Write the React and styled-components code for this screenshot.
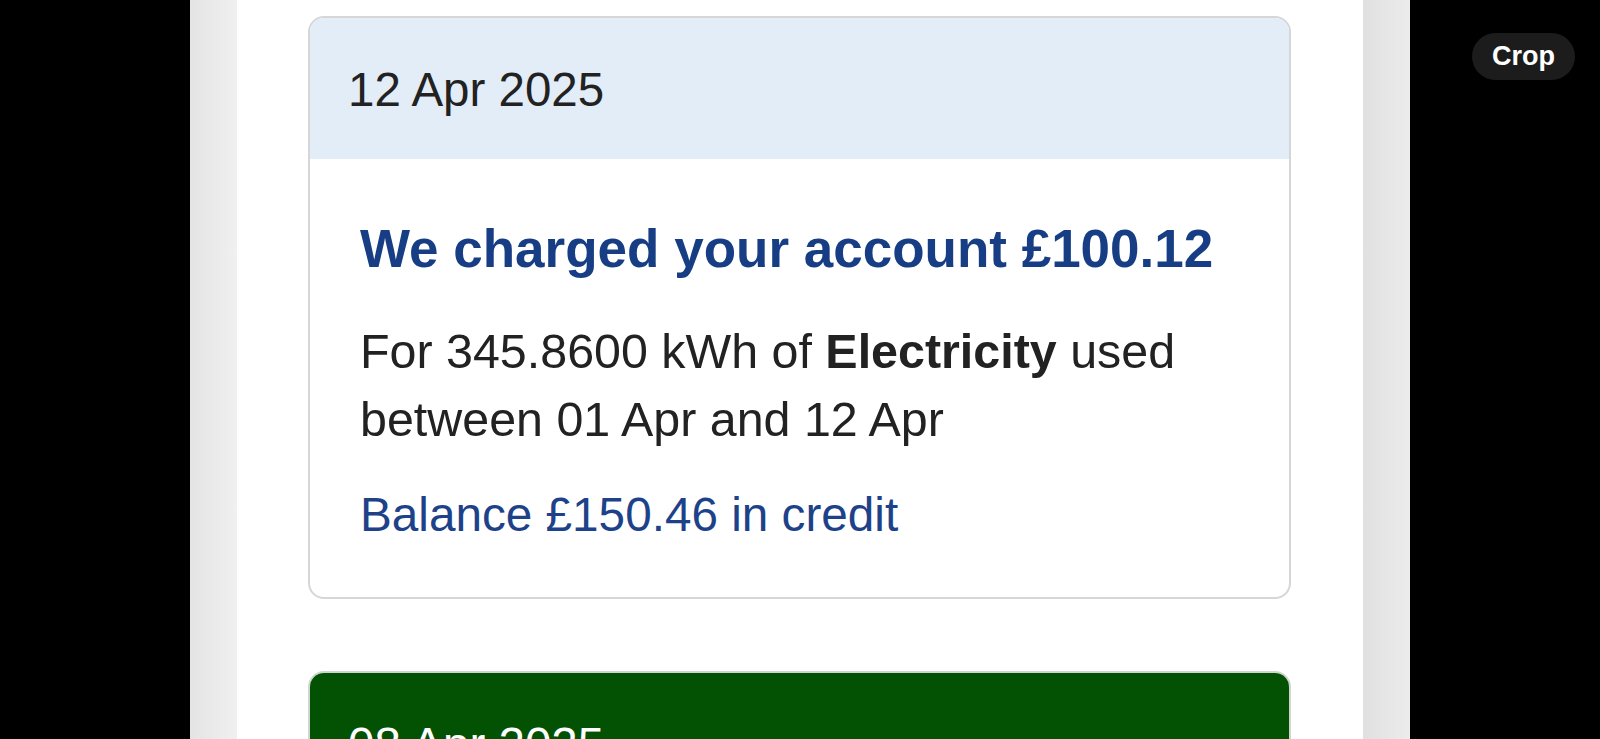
import React from "react";
import styled, { createGlobalStyle } from "styled-components";

const Global = createGlobalStyle`
  html, body { margin: 0; padding: 0; background: #000; }
  body { font-family: "Liberation Sans", Arial, sans-serif; }
  * { box-sizing: border-box; }
`;

const Screen = styled.div`
  display: flex;
  width: 1600px;
  height: 739px;
  overflow: hidden;
  background: #000;
`;

const Side = styled.div`
  width: 190px;
  flex: none;
  background: #000;
  display: flex;
  flex-direction: column;
  align-items: ${(p) => (p.$right ? "flex-start" : "stretch")};
  padding: ${(p) => (p.$right ? "33px 0 0 62px" : "0")};
`;

const Gutter = styled.div`
  width: 47px;
  flex: none;
  background: ${(p) =>
    p.$right
      ? "linear-gradient(to right, #e0e0e0, #ececec)"
      : "linear-gradient(to right, #e4e4e4, #f0f0f0)"};
`;

const Panel = styled.main`
  width: 1126px;
  flex: none;
  background: #fff;
  padding: 16px 72px 0 71px;
  display: flex;
  flex-direction: column;
  gap: 72px;
`;

const Card = styled.section`
  border: 2px solid ${(p) => (p.$tone === "green" ? "#cfd6cf" : "#d6d6d6")};
  border-radius: 16px;
  overflow: hidden;
  background: #fff;
  flex: none;
`;

const CardHeader = styled.div`
  height: 141px;
  display: flex;
  align-items: center;
  padding: 2px 0 0 38px;
  background: ${(p) => (p.$tone === "green" ? "#035203" : "#e3edf7")};
  color: ${(p) => (p.$tone === "green" ? "#ffffff" : "#222222")};
  font-size: 47.5px;
  line-height: 56px;
`;

const CardBody = styled.div`
  padding: 58px 40px 48px 50px;
  display: flex;
  flex-direction: column;
`;

const Title = styled.h2`
  margin: 0;
  font-size: 53px;
  line-height: 64px;
  font-weight: 700;
  color: #173e84;
  white-space: nowrap;
`;

const Detail = styled.p`
  margin: 36px 0 0;
  font-size: 48.4px;
  line-height: 68px;
  color: #222;
  strong { font-weight: 700; }
`;

const Balance = styled.p`
  margin: 28px 0 0;
  font-size: 47.7px;
  line-height: 68px;
  color: #1d4289;
`;

const Pill = styled.div`
  height: 47px;
  padding: 0 20px;
  border-radius: 24px;
  background: #1c1c1c;
  color: #fff;
  font-size: 27px;
  font-weight: 700;
  display: flex;
  align-items: center;
`;

const transactions = [
  {
    date: "12 Apr 2025",
    tone: "blue",
    title: "We charged your account £100.12",
    amount: "345.8600",
    fuel: "Electricity",
    range: "between 01 Apr and 12 Apr",
    balance: "Balance £150.46 in credit",
  },
  {
    date: "08 Apr 2025",
    tone: "green",
    title: "We received a payment £250.58",
    balance: "Balance £250.58 in credit",
  },
];

export default function App() {
  return (
    <>
      <Global />
      <Screen>
        <Side />
        <Gutter />
        <Panel>
          {transactions.map((t) => (
            <Card key={t.date} $tone={t.tone}>
              <CardHeader $tone={t.tone}>{t.date}</CardHeader>
              <CardBody>
                <Title>{t.title}</Title>
                {t.fuel && (
                  <Detail>
                    For {t.amount} kWh of <strong>{t.fuel}</strong> used{" "}
                    {t.range}
                  </Detail>
                )}
                <Balance>{t.balance}</Balance>
              </CardBody>
            </Card>
          ))}
        </Panel>
        <Gutter $right />
        <Side $right>
          <Pill>Crop</Pill>
        </Side>
      </Screen>
    </>
  );
}
